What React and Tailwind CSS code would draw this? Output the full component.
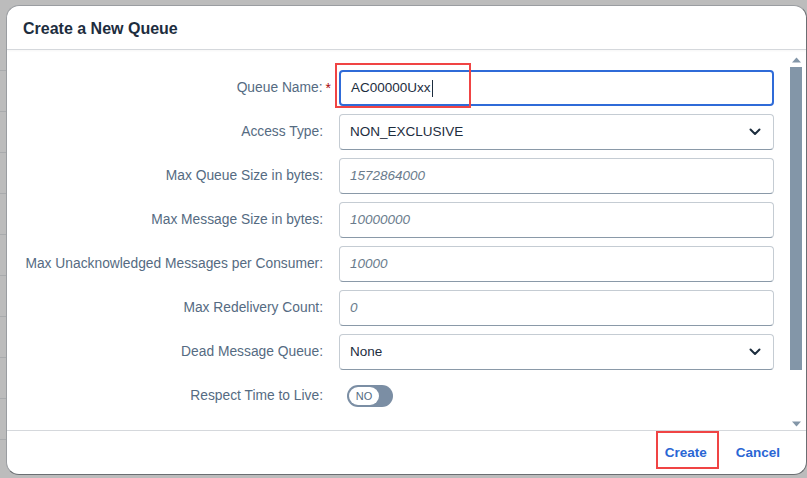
import React from "react";

const font = { fontFamily: '"Liberation Sans", Arial, sans-serif' };

function Chevron() {
  return (
    <svg width="12" height="8" viewBox="0 0 12 8" className="mr-[2px]">
      <path d="M1.5 1.5 L6 6 L10.5 1.5" fill="none" stroke="#1d2d3e" strokeWidth="2" strokeLinecap="round" strokeLinejoin="round" />
    </svg>
  );
}

function Label({ children, required }) {
  return (
    <div className="flex items-center justify-end h-[36px] pr-[10px] text-[13.8px] text-[#556b82] whitespace-nowrap">
      <span>{children}</span>
      {required ? <span className="text-[#aa0808] ml-[3px] mr-[-8px] text-[14px]">*</span> : null}
    </div>
  );
}

function Field({ children, focused, select }) {
  return (
    <div
      className={
        "h-[36px] w-[435px] rounded-[4px] bg-white flex items-center justify-between px-[10px] text-[13.5px] " +
        (focused
          ? "border-2 border-[#2f6bd8] px-[9px]"
          : "border border-[#c5ccd3] border-b-[#8a99a8]")
      }
    >
      {children}
      {select ? <Chevron /> : null}
    </div>
  );
}

const Placeholder = ({ children }) => <span className="italic text-[#6a7b8c]">{children}</span>;
const Value = ({ children }) => <span className="text-[#1d2d3e]">{children}</span>;

export default function App() {
  const rows = [
    { label: "Access Type:", field: <Field select><Value>NON_EXCLUSIVE</Value></Field> },
    { label: "Max Queue Size in bytes:", field: <Field><Placeholder>1572864000</Placeholder></Field> },
    { label: "Max Message Size in bytes:", field: <Field><Placeholder>10000000</Placeholder></Field> },
    { label: "Max Unacknowledged Messages per Consumer:", field: <Field><Placeholder>10000</Placeholder></Field> },
    { label: "Max Redelivery Count:", field: <Field><Placeholder>0</Placeholder></Field> },
    { label: "Dead Message Queue:", field: <Field select><Value>None</Value></Field> },
  ];
  const bgRows = [72, 113, 155, 195, 237, 278, 318, 360, 400, 440];
  return (
    <div className="relative w-[807px] h-[478px] overflow-hidden bg-[#bcbcbc]" style={font}>
      {/* page behind the dialog */}
      <div className="flex flex-col pt-[30px]">
        {bgRows.map((y, i) => (
          <div key={i} className="h-[41px] border-b border-[#a9abad]" />
        ))}
      </div>

      {/* dialog */}
      <div className="absolute left-[6px] top-[5px] w-[801px] h-[470px] rounded-[13px] bg-white border border-[#9a9da1] border-r-[#6b6e72] border-b-[#6b6e72] flex flex-col overflow-hidden">
        <div className="h-[44px] shrink-0 flex items-center pl-[16px] pt-[2px] border-b border-[#d5d8dc] shadow-[0_1px_2px_rgba(0,0,0,0.04)]">
          <span className="text-[16px] font-bold text-[#1d2d3e]">Create a New Queue</span>
        </div>

        <div className="flex-1 flex min-h-0">
          <div className="flex-1 pt-[20px]">
            <div className="grid grid-cols-[326px_435px] gap-y-[8px] gap-x-[6px]">
              <Label required>Queue Name:</Label>
              <div className="relative">
                <Field focused>
                  <span className="text-[#1d2d3e] flex items-center">
                    AC00000Uxx<span className="inline-block w-px h-[17px] bg-[#1d2d3e] ml-[1px]" />
                  </span>
                </Field>
                <div className="absolute left-[-4px] top-[-7px] w-[136px] h-[45px] border-2 border-[#f04444] pointer-events-none" />
              </div>
              {rows.map((r, i) => (
                <React.Fragment key={i}>
                  <Label>{r.label}</Label>
                  {r.field}
                </React.Fragment>
              ))}
              <Label>Respect Time to Live:</Label>
              <div className="flex items-center h-[36px] pl-[8px]">
                <div className="w-[46px] h-[22px] rounded-full bg-[#7b8ea4] flex items-center p-[2px]">
                  <div className="w-[30px] h-[18px] rounded-full bg-white flex items-center justify-center text-[11px] text-[#556b82]">
                    NO
                  </div>
                </div>
              </div>
            </div>
          </div>
          {/* scrollbar */}
          <div className="w-[16px] shrink-0 flex flex-col items-center pt-[7px] pb-[3px] mr-[2px]">
            <svg width="9" height="6" viewBox="0 0 9 6"><path d="M0 5.5 L4.5 0.5 L9 5.5 Z" fill="#8396a8" /></svg>
            <div className="flex-1 w-[12px] mt-[4px] mb-[3px] flex flex-col">
              <div className="h-[303px] bg-[#8396a8]" />
            </div>
            <svg width="9" height="6" viewBox="0 0 9 6"><path d="M0 0.5 L4.5 5.5 L9 0.5 Z" fill="#8396a8" /></svg>
          </div>
        </div>

        <div className="h-[44px] shrink-0 border-t border-[#d5d8dc] flex items-center justify-end pr-[23px] pt-[2px] gap-[18px]">
          <div className="relative px-[8px] text-[13.5px] font-semibold text-[#2a66d4]">
            Create
            <div className="absolute left-[-1px] top-[-12px] w-[63px] h-[38px] border-2 border-[#f04444]" />
          </div>
          <div className="px-[3px] text-[13.5px] font-semibold text-[#2a66d4]">Cancel</div>
        </div>
      </div>
    </div>
  );
}
